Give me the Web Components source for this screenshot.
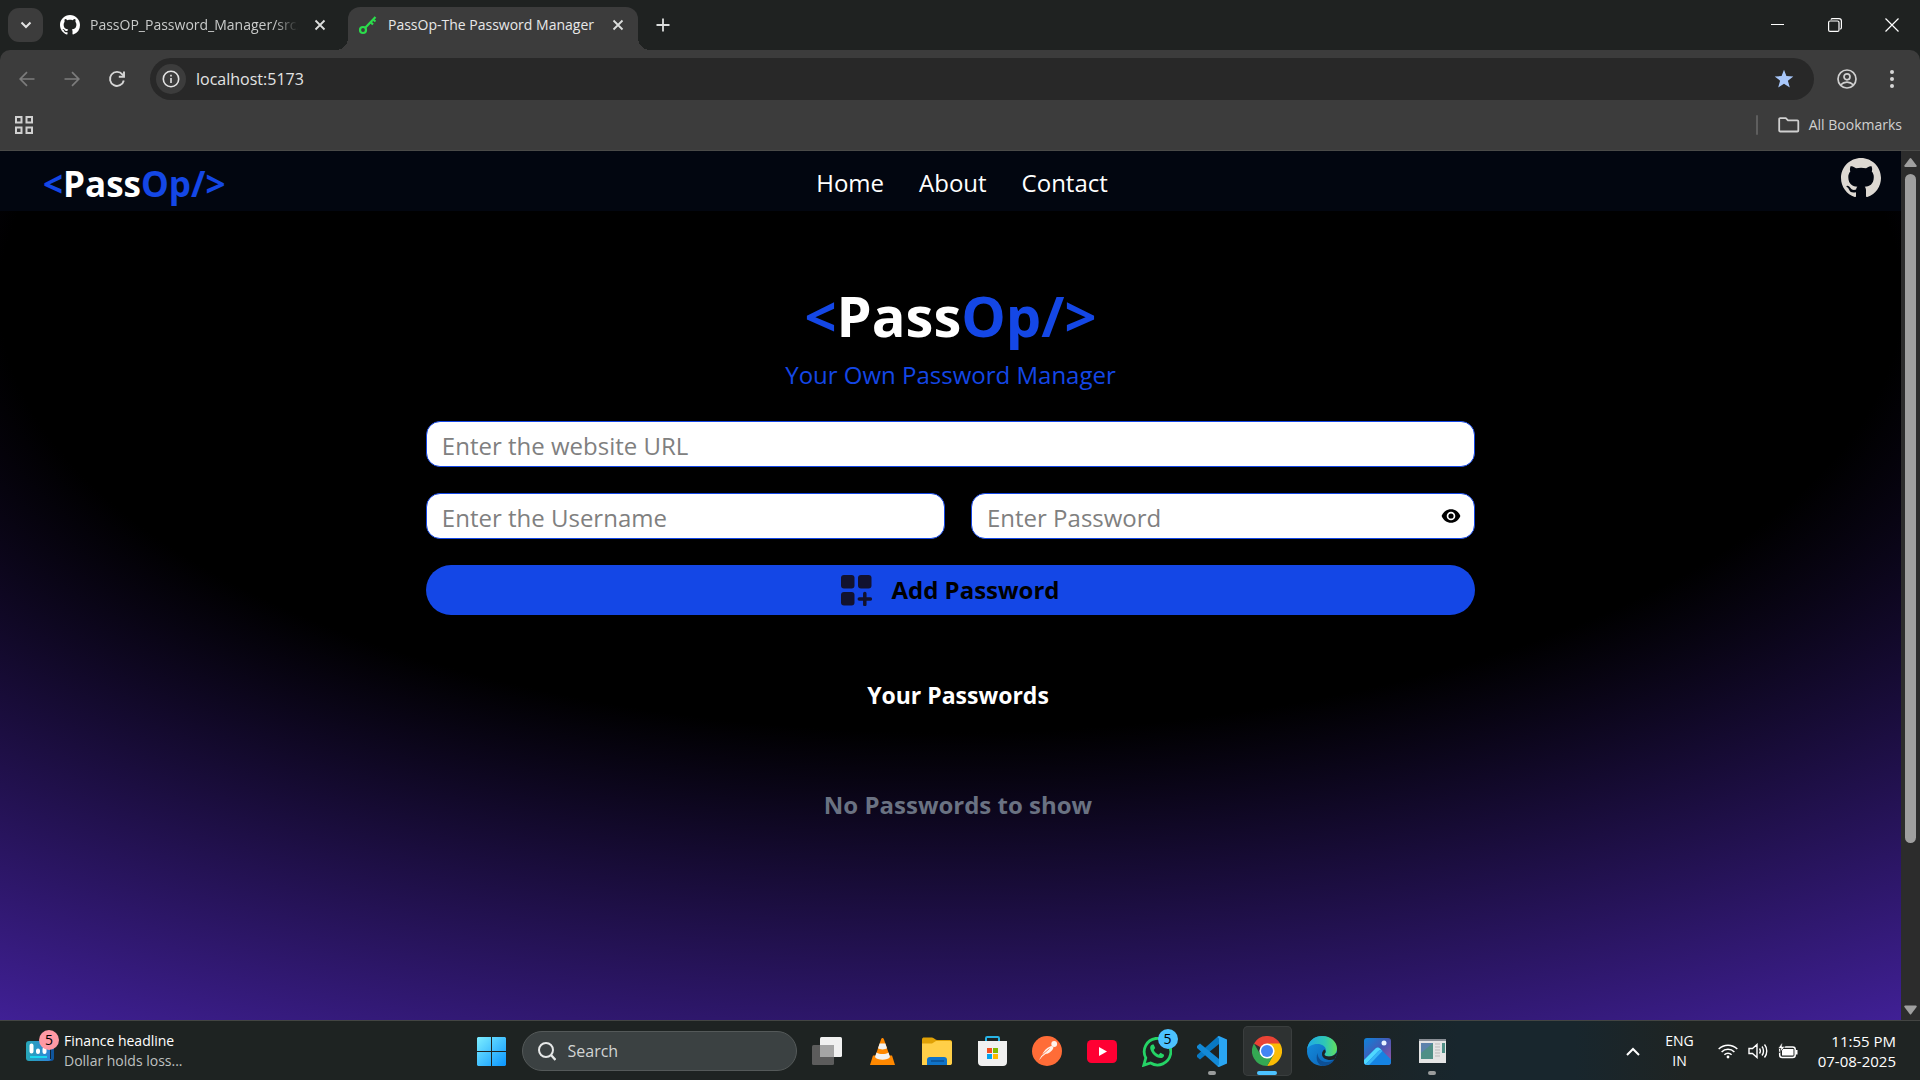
<!DOCTYPE html>
<html lang="en">
<head>
<meta charset="utf-8">
<title>PassOp-The Password Manager</title>
<style>
  body {
    margin: 0; height: 100vh; overflow: hidden; display: flex; flex-direction: column;
    font-family: "Open Sans", "Noto Sans", sans-serif; color: #fff; background: #000;
    --blue: #1447e6; --chrome: #3c3c3c; --strip: #1f2221;
  }
</style>
</head>
<body>
<tab-strip>
  <browser-tab close-label="Close tab">
    <svg slot="icon" width="20" height="20" viewBox="0 0 16 16" fill="#fff"><path d="M8 0C3.58 0 0 3.58 0 8c0 3.54 2.29 6.53 5.47 7.59.4.07.55-.17.55-.38 0-.19-.01-.82-.01-1.49-2.01.37-2.53-.49-2.69-.94-.09-.23-.48-.94-.82-1.13-.28-.15-.68-.52-.01-.53.63-.01 1.08.58 1.23.82.72 1.21 1.87.87 2.33.66.07-.52.28-.87.51-1.07-1.78-.2-3.64-.89-3.64-3.95 0-.87.31-1.59.82-2.15-.08-.2-.36-1.02.08-2.12 0 0 .67-.21 2.2.82.64-.18 1.32-.27 2-.27.68 0 1.36.09 2 .27 1.53-1.04 2.2-.82 2.2-.82.44 1.1.16 1.92.08 2.12.51.56.82 1.27.82 2.15 0 3.07-1.87 3.75-3.65 3.95.29.25.54.73.54 1.48 0 1.07-.01 1.93-.01 2.2 0 .21.15.46.55.38A8.013 8.013 0 0 0 16 8c0-4.42-3.58-8-8-8z"/></svg>
    PassOP_Password_Manager/src/
  </browser-tab>
  <browser-tab active close-label="Close tab">
    <svg slot="icon" width="20" height="20" viewBox="0 0 20 20" fill="none" stroke="#2bdc4b"><circle cx="5" cy="15" r="3" stroke-width="2.2"/><path d="M7 13 17.500 2M12.500 7l2.500 2.500M15 4.500l2.500 2" stroke-width="2.200"/></svg>
    PassOp-The Password Manager
  </browser-tab>
</tab-strip>
<tool-bar></tool-bar>
<bookmark-bar></bookmark-bar>
<web-view>
  <site-nav>
    <a href="#home">Home</a>
    <a href="#about">About</a>
    <a href="#contact">Contact</a>
  </site-nav>
  <password-manager></password-manager>
</web-view>
<task-bar></task-bar>

<script>
const GITHUB = 'M8 0C3.58 0 0 3.58 0 8c0 3.54 2.29 6.53 5.47 7.59.4.07.55-.17.55-.38 0-.19-.01-.82-.01-1.49-2.01.37-2.53-.49-2.69-.94-.09-.23-.48-.94-.82-1.13-.28-.15-.68-.52-.01-.53.63-.01 1.08.58 1.23.82.72 1.21 1.87.87 2.33.66.07-.52.28-.87.51-1.07-1.78-.2-3.64-.89-3.64-3.95 0-.87.31-1.59.82-2.15-.08-.2-.36-1.02.08-2.12 0 0 .67-.21 2.2.82.64-.18 1.32-.27 2-.27.68 0 1.36.09 2 .27 1.53-1.04 2.2-.82 2.2-.82.44 1.1.16 1.92.08 2.12.51.56.82 1.27.82 2.15 0 3.07-1.87 3.75-3.65 3.95.29.25.54.73.54 1.48 0 1.07-.01 1.93-.01 2.2 0 .21.15.46.55.38A8.013 8.013 0 0 0 16 8c0-4.42-3.58-8-8-8z';

const RESET = `
  :host, *, *::before, *::after { box-sizing: border-box; }
  button { all: unset; box-sizing: border-box; display: flex; align-items: center; justify-content: center; cursor: pointer; }
  input { font: inherit; color: inherit; margin: 0; }
  a { color: inherit; text-decoration: none; }
  svg { display: block; flex: none; }
`;

/* Registers an element whose shadow root is stamped from markup; the markup may depend on attributes. */
function define(name, css, html) {
  customElements.define(name, class extends HTMLElement {
    constructor() {
      super();
      this.attachShadow({ mode: 'open' });
    }
    connectedCallback() {
      const t = document.createElement('template');
      t.innerHTML = `<style>${RESET}${css}</style>` + (typeof html === 'function' ? html(this) : html);
      this.shadowRoot.replaceChildren(t.content.cloneNode(true));
    }
  });
}

/* ---------- browser window ---------- */
define('browser-tab', `
  :host { display: flex; align-items: center; height: 43px; width: 290px; padding: 0 14px 7px 10px; gap: 10px; font-size: 14px; line-height: 20px; color: #c9cbca; }
  :host([active]) { position: relative; background: var(--chrome); border-radius: 12px 12px 0 0; color: #e8e8e8; }
  :host([active])::before, :host([active])::after { content: ""; position: absolute; bottom: 0; width: 12px; height: 12px; }
  :host([active])::before { right: 100%; background: radial-gradient(circle at 0 0, transparent 12px, var(--chrome) 12px); }
  :host([active])::after { left: 100%; background: radial-gradient(circle at 100% 0, transparent 12px, var(--chrome) 12px); }
  .title { flex: 1; min-width: 0; white-space: nowrap; overflow: hidden; -webkit-mask-image: linear-gradient(to right, #000 calc(100% - 30px), transparent calc(100% - 6px)); }
  :host([active]) .title { -webkit-mask-image: none; }
`, el => `
  <slot name="icon"></slot><span class="title"><slot></slot></span>
  <button aria-label="${el.getAttribute('close-label')}"><svg width="12" height="12" viewBox="0 0 12 12" stroke="#dcdedd" stroke-width="1.800"><path d="M1.500 1.500l9 9M10.500 1.500l-9 9"/></svg></button>
`);

define('tab-strip', `
  :host { display: flex; align-items: center; height: 50px; padding-left: 8px; background: var(--strip); }
  .menu { width: 35px; height: 34px; border-radius: 11px; background: var(--chrome); margin-right: 7px; }
  .tabs { display: flex; gap: 8px; align-self: flex-end; }
  .new { width: 36px; height: 36px; margin-left: 7px; }
  .win { margin-left: auto; display: flex; }
  .win button { width: 57px; height: 50px; }
`, `
  <button class="menu" aria-label="Search tabs"><svg width="12" height="8" viewBox="0 0 12 8" fill="none" stroke="#e3e3e3" stroke-width="2"><path d="M1.500 1.500 6 6l4.500-4.500"/></svg></button>
  <div class="tabs"><slot></slot></div>
  <button class="new" aria-label="New tab"><svg width="14" height="14" viewBox="0 0 14 14" stroke="#dcdedd" stroke-width="1.800"><path d="M7 .5v13M.5 7h13"/></svg></button>
  <div class="win">
    <button aria-label="Minimise"><svg width="13" height="13" viewBox="0 0 13 13" stroke="#fff"><path d="M0 5.500h13"/></svg></button>
    <button aria-label="Restore"><svg width="14" height="14" viewBox="0 0 14 14" fill="none" stroke="#fff" stroke-width="1.200"><rect x=".6" y="3" width="10.400" height="10.400" rx="1.500"/><path d="M3 1.600C3.200.9 3.800.6 4.500.6H11a2.400 2.400 0 0 1 2.400 2.400v6.500c0 .8-.5 1.400-1.200 1.600"/></svg></button>
    <button aria-label="Close"><svg width="14" height="14" viewBox="0 0 14 14" stroke="#fff" stroke-width="1.200"><path d="M.5.5l13 13M13.500.5l-13 13"/></svg></button>
  </div>
`);

define('tool-bar', `
  :host { display: block; background: var(--strip); }
  .bar { display: flex; align-items: center; height: 50px; padding: 8px 6px 0 4px; background: var(--chrome); border-radius: 10px 10px 0 0; }
  .nav { width: 45px; height: 42px; }
  .box { flex: 1; display: flex; align-items: center; height: 42px; margin: 0 10px 0 11px; padding: 0 20px 0 6px; border-radius: 21px; background: #282828; }
  .info { width: 30px; height: 30px; border-radius: 50%; background: var(--chrome); }
  input { flex: 1; border: 0; outline: 0; background: none; padding: 0 10px; font-size: 16px; line-height: 24px; color: #e3e3e3; }
  .side { width: 45px; height: 42px; }
`, `
  <div class="bar">
    <button class="nav" aria-label="Back"><svg width="16" height="16" viewBox="0 0 16 16" fill="none" stroke="#7c7c7c" stroke-width="1.700"><path d="M15.500 8H1.500M8 1.200 1.200 8 8 14.800"/></svg></button>
    <button class="nav" aria-label="Forward"><svg width="16" height="16" viewBox="0 0 16 16" fill="none" stroke="#7c7c7c" stroke-width="1.700"><path d="M.5 8h14M8 1.200 14.800 8 8 14.800"/></svg></button>
    <button class="nav" aria-label="Reload"><svg width="18" height="18" viewBox="0 0 18 18" fill="none" stroke="#d6d6d6" stroke-width="1.900"><path d="M15.800 10.500A7 7 0 1 1 14.500 4.600L16 6.200"/><path d="M16 1.500v5.200h-5.200"/></svg></button>
    <div class="box">
      <button class="info" aria-label="View site information"><svg width="18" height="18" viewBox="0 0 18 18" fill="none" stroke="#e3e3e3" stroke-width="1.600"><circle cx="9" cy="9" r="7.700"/><path d="M9 8v5M9 4.800v1.700"/></svg></button>
      <input type="text" value="localhost:5173" aria-label="Address and search bar" spellcheck="false">
      <button aria-label="Bookmark this tab"><svg width="20" height="20" viewBox="0 0 20 20" fill="#a8c7fa"><path d="M10 .8l2.400 6.300 6.900.3-5.400 4.300 1.900 6.700L10 14.700l-5.800 3.700 1.900-6.700L.7 7.400l6.900-.3z"/></svg></button>
    </div>
    <button class="side" aria-label="Profile"><svg width="20" height="20" viewBox="0 0 20 20" fill="none" stroke="#d0d0d0" stroke-width="1.700"><circle cx="10" cy="10" r="9"/><circle cx="10" cy="7.800" r="3"/><path d="M3.500 16c2-2 4-2.800 6.500-2.800s4.500.8 6.500 2.800"/></svg></button>
    <button class="side" aria-label="Menu"><svg width="4" height="18" viewBox="0 0 4 18" fill="#d6d6d6"><circle cx="2" cy="2" r="2"/><circle cx="2" cy="9" r="2"/><circle cx="2" cy="16" r="2"/></svg></button>
  </div>
`);

define('bookmark-bar', `
  :host { display: flex; align-items: center; height: 51px; padding: 0 18px 0 15px; background: var(--chrome); border-bottom: 1px solid #4a4a48; font-size: 14px; line-height: 20px; color: #d0d0d0; }
  i { width: 2px; height: 20px; margin-left: auto; margin-right: 20px; background: #5e5e5e; border-radius: 1px; }
  .all { gap: 9px; }
`, `
  <button aria-label="Apps"><svg width="19" height="19" viewBox="0 0 19 19" fill="none" stroke="#d0d0d0" stroke-width="2"><rect x="1" y="1" width="5.500" height="5.500"/><rect x="11.500" y="1" width="5.500" height="5.500"/><rect x="1" y="11.500" width="5.500" height="5.500"/><rect x="11.500" y="11.500" width="5.500" height="5.500"/></svg></button>
  <i></i>
  <button class="all"><svg width="22" height="16" viewBox="0 0 22 16" fill="none" stroke="#d0d0d0" stroke-width="1.800" stroke-linejoin="round"><path d="M1.200 13.500V2.200c0-.6.400-1 1-1h5.600l2.200 2.200h9.300c.6 0 1 .4 1 1v9.100c0 .6-.4 1-1 1H2.200c-.6 0-1-.4-1-1z"/></svg>All Bookmarks</button>
`);

define('web-view', `
  :host { flex: 1; min-height: 0; display: flex; }
  main { flex: 1; min-width: 0; overflow: hidden; background: radial-gradient(125% 125% at 50% 10%, #000 40%, #63e 100%) no-repeat 0 60px / 100% 100%; }
  .scroll { width: 19px; display: flex; flex-direction: column; align-items: center; justify-content: space-between; padding: 7px 0 5px; background: #2c2c2c; }
  .track { flex: 1; display: flex; flex-direction: column; margin: 7px 0 5px; }
  .thumb { width: 11px; flex: 0 0 81%; border-radius: 6px; background: #9f9f9f; }
`, `
  <main><slot></slot></main>
  <div class="scroll">
    <svg width="13" height="9" viewBox="0 0 13 9" fill="#9f9f9f"><path d="M5.700.6a1 1 0 0 1 1.600 0L12.600 7.500c.4.600.1 1.500-.8 1.500H1.200C.3 9 0 8.100.4 7.500z"/></svg>
    <div class="track"><div class="thumb"></div></div>
    <svg width="13" height="10" viewBox="0 0 13 9" fill="#9f9f9f"><path d="M5.700 8.400a1 1 0 0 0 1.600 0L12.600 1.500c.4-.6.1-1.500-.8-1.500H1.200C.3 0 0 .9.400 1.500z"/></svg>
  </div>
`);

/* ---------- PassOp page ---------- */
define('brand-mark', `
  :host { display: block; font-weight: 700; white-space: nowrap; color: #fff; }
  span { color: var(--blue); }
`, `<span>&lt;</span>Pass<span>Op/&gt;</span>`);

define('site-nav', `
  :host { display: grid; grid-template-columns: 1fr auto 1fr; height: 60px; padding: 0 20px 0 43px; background: #020610; font-size: 24px; line-height: 36px; }
  brand-mark { font-size: 35px; line-height: 44px; padding-top: 11px; }
  nav { display: flex; gap: 35px; padding-top: 14px; }
  ::slotted(a) { color: #fff; text-decoration: none; }
  .gh { justify-self: end; padding-top: 7px; }
`, `
  <brand-mark></brand-mark>
  <nav><slot></slot></nav>
  <a class="gh" href="#github" aria-label="GitHub"><svg width="40" height="40" viewBox="0 0 16 16" fill="#ddd8d2"><path d="${GITHUB}"/></svg></a>
`);

define('text-field', `
  :host { display: block; position: relative; min-width: 0; font-size: 24px; line-height: 32px; }
  input { display: block; width: 100%; height: 46px; padding: 2px 15px 0; border: 1px solid var(--blue); border-radius: 14px; background: #fff; color: #111; outline: 0; }
  input::placeholder { color: #808080; opacity: 1; }
`, el => `
  <input type="${el.getAttribute('type') || 'text'}" placeholder="${el.getAttribute('placeholder')}" aria-label="${el.getAttribute('placeholder')}"><slot></slot>
`);

define('password-manager', `
  :host { display: flex; flex-direction: column; align-items: center; padding-top: 74px; font-size: 24px; line-height: 36px; }
  h1, h2, p { margin: 0; }
  h1 { font-size: 56px; line-height: 60px; }
  .tag { margin-top: 12px; color: var(--blue); }
  form { width: 55.2%; margin-top: 28px; display: flex; flex-direction: column; gap: 26px; }
  .row { display: grid; grid-template-columns: 104fr 101fr; gap: 26px; }
  .eye { position: absolute; right: 14px; top: 13px; }
  .add { height: 50px; border-radius: 25px; background: var(--blue); color: #000; font-weight: 700; gap: 19px; }
  .list { display: flex; flex-direction: column; align-items: center; padding: 62px 0 0 15px; gap: 74px; font-weight: 700; }
  h2 { font-size: 23px; line-height: 36px; }
  .list p { color: #6a7282; }
`, `
  <h1><brand-mark></brand-mark></h1>
  <p class="tag">Your Own Password Manager</p>
  <form onsubmit="return false">
    <text-field placeholder="Enter the website URL"></text-field>
    <div class="row">
      <text-field placeholder="Enter the Username"></text-field>
      <text-field type="password" placeholder="Enter Password">
        <button class="eye" type="button" aria-label="Show password"><svg width="20" height="20" viewBox="0 0 20 20"><path d="M10 3.200C5.800 3.200 2.300 5.800.6 10c1.700 4.200 5.200 6.800 9.400 6.800s7.700-2.600 9.400-6.800C17.700 5.800 14.200 3.200 10 3.200z"/><circle cx="10" cy="10" r="4.300" fill="#fff"/><circle cx="10" cy="10" r="2.600"/></svg></button>
      </text-field>
    </div>
    <button class="add"><svg width="31" height="31" viewBox="0 0 31 31" fill="#12122e"><rect x="0" y="0" width="13.500" height="13.500" rx="3"/><rect x="17" y="0" width="13.500" height="13.500" rx="3"/><rect x="0" y="17" width="13.500" height="13.500" rx="3"/><path d="M23.800 18.500v11M18.300 24h11" stroke="#12122e" stroke-width="3.500" stroke-linecap="round"/></svg>Add Password</button>
  </form>
  <div class="list"><h2>Your Passwords</h2><p>No Passwords to show</p></div>
`);

/* ---------- Windows task bar ---------- */
define('task-app', `
  :host { display: flex; width: 55px; height: 60px; align-items: center; justify-content: center; }
  button { position: relative; width: 49px; height: 50px; border-radius: 5px; }
  :host([open="front"]) button { background: #2e3232; box-shadow: inset 0 0 0 1px #3a3e3e; }
  :host([open]) button::after { content: ""; position: absolute; bottom: 1px; width: 8px; height: 4px; border-radius: 2px; background: #9a9c9c; }
  :host([open="front"]) button::after { width: 20px; background: #4cc2ff; }
  b { position: absolute; top: 3px; right: 4px; width: 20px; height: 20px; border-radius: 50%; background: #4cc2ff; color: #000; font: 400 14px/20px "Open Sans", sans-serif; text-align: center; }
`, el => `<button aria-label="${el.getAttribute('name')}"><slot></slot>${el.hasAttribute('badge') ? `<b>${el.getAttribute('badge')}</b>` : ''}</button>`);

define('task-bar', `
  :host { display: grid; grid-template-columns: 1fr auto 1fr; height: 60px; border-top: 1px solid #434543; font-size: 14px; line-height: 20px;
    background: linear-gradient(to right, #1e2322 0 68%, #18262d 76%, #18262d 82%, #1f2423 88%); }
  .widget { justify-self: start; margin-left: 26px; gap: 10px; height: 59px; }
  .pic { position: relative; }
  .pic b { position: absolute; left: 13px; top: -11px; width: 20px; height: 20px; border-radius: 50%; background: #ff99a4; color: #000; font-weight: 400; line-height: 20px; text-align: center; }
  small { display: block; font-size: inherit; color: #bfc1c0; }
  .mid { display: flex; align-items: center; }
  .start { width: 61px; height: 59px; }
  label { display: flex; align-items: center; gap: 12px; width: 275px; height: 40px; margin-right: 3px; padding: 0 15px; border-radius: 20px; background: #3b4142; border: 1px solid #545959; }
  input { width: 100%; min-width: 0; border: 0; outline: 0; background: none; padding: 0; font-size: 16px; line-height: 24px; }
  input::placeholder { color: #d2d4d4; opacity: 1; }
  .tray { display: flex; align-items: center; justify-content: flex-end; padding-right: 24px; text-align: center; }
  .tray button { margin-right: 20px; display: block; }
  .tray .net { display: flex; gap: 10px; margin-right: 20px; margin-left: 12px; }
  .tray .clock { text-align: right; margin: 0; font-size: 15px; }
  .tray .lang { margin-right: 12px; margin-left: 5px; }
`, `
  <button class="widget">
    <span class="pic"><svg width="28" height="20" viewBox="0 0 28 20"><defs><linearGradient id="w" x1="0" x2="1"><stop stop-color="#27a6b8"/><stop offset="1" stop-color="#2f83d8"/></linearGradient></defs><rect x="4" width="24" height="20" rx="3" fill="#0f559c"/><rect width="25" height="20" rx="3" fill="url(#w)"/><path d="M24.500 2v16" stroke="#123" /><path d="M5.500 4.500v6M12 9.500v1.500M18.500 8v3" stroke="#fff" stroke-width="4" stroke-linecap="round"/><path d="M4 16h17" stroke="#19d7f0" stroke-width="2"/></svg><b>5</b></span>
    <span>Finance headline<small>Dollar holds loss...</small></span>
  </button>
  <div class="mid">
    <button class="start" aria-label="Start"><svg width="29" height="29" viewBox="0 0 29 29"><defs><linearGradient id="s" gradientUnits="userSpaceOnUse" x2="29" y2="29"><stop stop-color="#7deeff"/><stop offset="1" stop-color="#0a95ff"/></linearGradient></defs><path fill="url(#s)" d="M1 0h13v14H0V1zM15 0h13l1 1v13H15zM0 15h14v14H1l-1-1zM15 15h14v13l-1 1H15z"/></svg></button>
    <label><svg width="18" height="19" viewBox="0 0 18 19" fill="none" stroke="#e6e8e8" stroke-width="2"><circle cx="8" cy="8" r="7"/><path d="M13 13l4.500 5" stroke-width="2.400"/></svg><input type="search" placeholder="Search" aria-label="Search"></label>

    <task-app name="Task view"><svg width="30" height="28" viewBox="0 0 30 28"><rect x="8" width="22" height="20" rx="1.500" fill="#f1f1f1"/><rect y="8" width="22" height="20" rx="1.500" fill="#5c5c5c"/><path d="M8 8h14v12H8z" fill="#a5a5a5"/></svg></task-app>
    <task-app name="VLC media player"><svg width="25" height="27" viewBox="0 0 25 27"><path d="M3 17.500h19L25 27H0z" fill="#ff8800"/><path d="M11 1.500c.5-2 2.500-2 3 0L20 19c-2 3.500-13 3.500-15 0z" fill="#ff8800"/><path d="M9.600 5.500h5.800l1.600 4.800c-2 1.500-7 1.500-9 0zM6.500 14.500c3 2 9 2 12 0L20 19c-2 3.500-13 3.500-15 0z" fill="#f2f2f2"/></svg></task-app>
    <task-app name="File Explorer"><svg width="30" height="28" viewBox="0 0 30 28"><path d="M0 2.500C0 1 1 .5 2 .5h8c2 0 3 2.500 5 2.500h13c1.500 0 2 1 2 2v6H0z" fill="#e0a106"/><path d="M0 6.500h10L14 4h14c1.500 0 2 .7 2 2v20c0 1.500-1 2-2 2H0z" fill="#ffcf48"/><path d="M5 28v-5c0-2 1-3 3-3h14c2 0 3 1 3 3v5z" fill="#0f73c9"/><path d="M9 24h13" stroke="#0b4f92" stroke-width="1.500"/></svg></task-app>
    <task-app name="Microsoft Store"><svg width="29" height="30" viewBox="0 0 29 30"><path d="M8 6V2.200C8 1.500 8.500 1 9.200 1h10.600c.7 0 1.200.5 1.200 1.200V6" fill="none" stroke="#28b4e6" stroke-width="2"/><path d="M0 5h29v21c0 2.500-1.500 4-4 4H4c-2.500 0-4-1.500-4-4z" fill="#f0f0f0"/><path d="M9 12h5v5H9z" fill="#f25022"/><path d="M15 12h5v5h-5z" fill="#7fba00"/><path d="M9 18h5v5H9z" fill="#00a4ef"/><path d="M15 18h5v5h-5z" fill="#ffb900"/></svg></task-app>
    <task-app name="Postman"><svg width="30" height="30" viewBox="0 0 30 30"><circle cx="15" cy="15" r="15" fill="#ff6c37"/><circle cx="22.200" cy="8" r="2.900" fill="#fff3ec"/><path d="M20 10c-4 .5-7.500 4-9.500 8l-3.500 6 6-5.500c4-1 8-4 8.500-7z" fill="#fff3ec"/><path d="M9.500 19.500l8-7M14.500 18l-5 3.500" stroke="#ff6c37" stroke-width=".8"/></svg></task-app>
    <task-app name="YouTube"><svg width="30" height="23" viewBox="0 0 30 23"><rect width="30" height="23" rx="4.500" fill="#ff0033"/><path d="M12 7l8 4.500-8 4.500z" fill="#fff"/></svg></task-app>
    <task-app name="WhatsApp" badge="5"><svg width="30" height="31" viewBox="0 0 30 31"><path d="M1.800 29.200l2-7.300A13.300 13.300 0 1 1 8.600 27z" fill="none" stroke="#25d366" stroke-width="2.800"/><path d="M10.500 8.500c-1.500.3-2.500 2-2.300 3.700.6 5 6 9.500 10.300 9.900 1.800.1 3.800-1.200 3.600-3.400l-3.600-1.900-1.900 1.900c-2.200-.9-4-2.700-4.900-4.700l1.500-1.900-1.500-3.600z" fill="#25d366"/></svg></task-app>
    <task-app name="Visual Studio Code" open="back"><svg width="30" height="31" viewBox="0 0 30 31"><path d="M22 0v8L3 23.500 0 21v-2L21 .2z" fill="#0879c4"/><path d="M22 31v-8L3 7.500 0 10v2l21 18.800z" fill="#1389d6"/><path d="M22 0l8 3.500v24L22 31l-1.500-1 1.500-1.500V2.500L20.500 1z" fill="#2aa5f2"/></svg></task-app>
    <task-app name="Google Chrome" open="front"><svg width="30" height="30" viewBox="0 0 30 30"><path d="M15 15L2 7.500A15 15 0 0 1 28 7.500z" fill="#ea4335"/><path d="M15 7.500h13A15 15 0 0 1 15 30l6.500-11.200z" fill="#fbbc05"/><path d="M8.500 18.700L2 7.500A15 15 0 0 0 15 30l6.500-11.200z" fill="#34a853"/><circle cx="15" cy="15" r="7.600" fill="#fff"/><circle cx="15" cy="15" r="6" fill="#4285f4"/></svg></task-app>
    <task-app name="Microsoft Edge"><svg width="30" height="30" viewBox="0 0 30 30"><defs><linearGradient id="e1" x1="0" x2="1"><stop stop-color="#1fa9e8"/><stop offset=".6" stop-color="#2fc7b4"/><stop offset="1" stop-color="#62e05c"/></linearGradient><linearGradient id="e2" x1="0" y1="0" x2="1" y2="1"><stop stop-color="#1590e0"/><stop offset="1" stop-color="#0b5fb4"/></linearGradient></defs><circle cx="15" cy="15" r="15" fill="url(#e2)"/><path d="M0 14C1 5 7 0 15 0c9 0 15 6 15 12.500 0 5-3.500 8-8 8-3 0-5-1-4.500-2.500 1-1 1.500-2 1.500-3.500 0-4-4-6.500-8.500-6.500C5 8 1 10.500 0 14z" fill="url(#e1)"/><path d="M10.500 17c0 6 5 9.500 10.500 9 3-.2 5-1.500 6.500-2.500C25 28 20 30 15.500 30 11.500 29 8 24 10.500 17z" fill="#0d4f94"/><path d="M17.500 18c-.5 1.500 1.500 2.500 4.500 2.500 3 0 6-1.500 7.500-4l.5 1.500-2.500 5.500C21 25 15 23 15 18c0-2 1-3.500 2.500-4.500 2 1.500 1 3.500 0 4.500z" fill="#1e2322"/></svg></task-app>
    <task-app name="Photos"><svg width="27" height="27" viewBox="0 0 27 27"><defs><linearGradient id="p" x2="1" y2="1"><stop stop-color="#0d84dc"/><stop offset=".5" stop-color="#4658b4"/><stop offset="1" stop-color="#a254a5"/></linearGradient></defs><rect width="27" height="27" rx="3" fill="url(#p)"/><circle cx="20" cy="5" r="2.500" fill="#e9f3ff"/><path d="M0 22L11.500 10.500c1.500-1.500 3-1.500 4.500 0L27 21.500V24a3 3 0 0 1-3 3H3a3 3 0 0 1-3-3z" fill="#1583e2"/><path d="M0 22L11.500 10.500c1.500-1.500 3-1.500 4.500 0l2.500 2.500c-1.500-1-3-1-4.500.5L1.500 26.500C.5 26 0 25 0 24z" fill="#4fd8ff"/><path d="M14 13.500c1.500-1.500 3-1.500 4.500-.5L10 22 5 27H3l-1.500-.5z" fill="#36b4f6"/></svg></task-app>
    <task-app name="Remote window" open="back"><svg width="27" height="24" viewBox="0 0 27 24"><rect width="27" height="24" fill="#e4e4e4"/><path d="M0 0h27v2H0z" fill="#8a8f96"/><rect x="2" y="4" width="12" height="16" fill="#4f8f86"/><path d="M2 4h12L2 14z" fill="#5c82ab"/><path d="M16 5h5M16 8h5M16 11h5M16 14h5M16 17h5" stroke="#b9b9b9"/><path d="M23 4h3v10h-3z" fill="#4f8f86"/></svg></task-app>
  </div>
  <div class="tray">
    <button aria-label="Show hidden icons"><svg width="14" height="9" viewBox="0 0 14 9" fill="none" stroke="#fff" stroke-width="2"><path d="M1 8l6-6 6 6"/></svg></button>
    <button class="lang">ENG<br>IN</button>
    <button class="net" aria-label="Network, volume and battery">
      <svg width="20" height="16" viewBox="0 0 20 16" fill="none" stroke="#fff" stroke-width="1.500"><path d="M.7 6a13.200 13.200 0 0 1 18.600 0M3.600 9a9 9 0 0 1 12.800 0M6.400 11.800a5.100 5.100 0 0 1 7.200 0"/><circle cx="10" cy="14" r="1.400" fill="#fff" stroke="none"/></svg>
      <svg width="20" height="16" viewBox="0 0 20 16" fill="none" stroke="#fff" stroke-width="1.400"><path d="M1 5.500h3.500L9 1.500v13l-4.500-4H1zM11.500 5.500c1 1.500 1 3.500 0 5M14 3.500c2 2.500 2 6.500 0 9M16.500 1.500c3 3.500 3 9.500 0 13"/></svg>
      <svg width="20" height="16" viewBox="0 0 20 16"><rect x="1.700" y="4" width="15.500" height="10.500" rx="2.500" fill="none" stroke="#fff" stroke-width="1.500"/><path d="M4 6h11.500v6.500H4z" fill="#fff"/><path d="M18 7h1.500v4.500H18z" fill="#fff"/><path d="M4.500-1L0 5.500h3L1.500 10 7 3.500H4z" fill="#fff" stroke="#1f2423" stroke-width=".7"/></svg>
    </button>
    <button class="clock">11:55 PM<br>07-08-2025</button>
  </div>
`);
</script>
</body>
</html>
